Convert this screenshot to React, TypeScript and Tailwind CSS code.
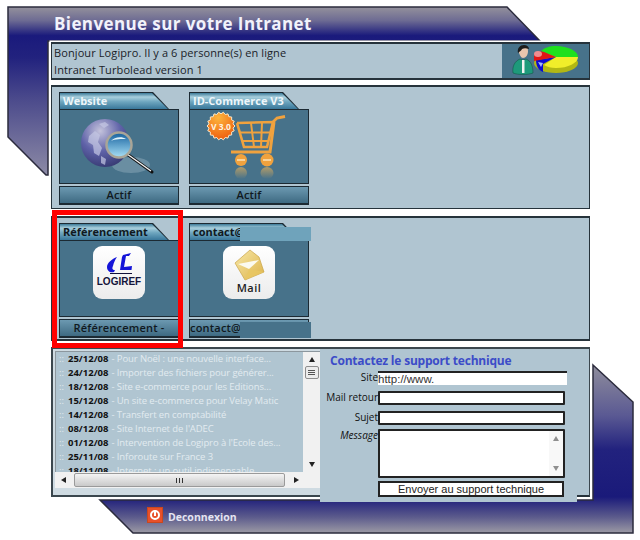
import type { ReactNode } from "react";

const news = [
  ["25/12/08", "Pour Noël : une nouvelle interface..."],
  ["24/12/08", "Importer des fichiers pour générer..."],
  ["18/12/08", "Site e-commerce pour les Editions..."],
  ["15/12/08", "Un site e-commerce pour Velay Matic"],
  ["14/12/08", "Transfert en comptabilité"],
  ["08/12/08", "Site Internet de l'ADEC"],
  ["01/12/08", "Intervention de Logipro à l'Ecole des..."],
  ["25/11/08", "Inforoute sur France 3"],
  ["18/11/08", "Internet : un outil indispensable"],
];

// sawtooth edge of the "V 3.0" sticker
const badgePoints = Array.from({ length: 36 }, (_, i) => {
  const r = i % 2 === 0 ? 14 : 12.2;
  const a = (i * Math.PI) / 18;
  return `${(31 + r * Math.cos(a)).toFixed(1)},${(16 + r * Math.sin(a)).toFixed(1)}`;
}).join(" ");

function Backdrop() {
  return (
    <svg className="absolute left-0 top-0" width="640" height="540">
      <defs>
        <linearGradient id="topBand" gradientUnits="userSpaceOnUse" x1="0" y1="7" x2="0" y2="176">
          <stop offset="0" stopColor="#94919c" />
          <stop offset="0.08" stopColor="#6d6b93" />
          <stop offset="0.17" stopColor="#1a1a7c" />
          <stop offset="0.3" stopColor="#22227e" />
          <stop offset="0.55" stopColor="#4c4b8c" />
          <stop offset="1" stopColor="#8d8ba6" />
        </linearGradient>
        <linearGradient id="lowBand" gradientUnits="userSpaceOnUse" x1="0" y1="365" x2="0" y2="534">
          <stop offset="0" stopColor="#8f8d9c" />
          <stop offset="0.3" stopColor="#5a5993" />
          <stop offset="0.5" stopColor="#22227e" />
          <stop offset="0.78" stopColor="#1a1a7a" />
          <stop offset="0.9" stopColor="#5c5b8c" />
          <stop offset="1" stopColor="#a09ea6" />
        </linearGradient>
      </defs>
      <path d="M8 7H507L540 41H48V175H46L8 137Z" fill="url(#topBand)" stroke="#2b2b3d" strokeWidth="1.5" />
      <path d="M593 365L633 402V533H133L100 500H593Z" fill="url(#lowBand)" stroke="#2b2b3d" strokeWidth="1.5" />
    </svg>
  );
}

function GlobeIcon() {
  return (
    <svg width="118" height="73" viewBox="0 0 118 73">
      <defs>
        <radialGradient id="globe" cx="0.4" cy="0.25" r="0.85">
          <stop offset="0" stopColor="#c4c3dc" />
          <stop offset="0.5" stopColor="#5f62a8" />
          <stop offset="1" stopColor="#2f3268" />
        </radialGradient>
        <linearGradient id="lens" x1="0" y1="0" x2="0" y2="1">
          <stop offset="0" stopColor="#15609e" />
          <stop offset="1" stopColor="#a8e0f6" />
        </linearGradient>
      </defs>
      <ellipse cx="71" cy="55" rx="19" ry="8" fill="#6a8ea2" />
      <circle cx="45" cy="33" r="24" fill="url(#globe)" />
      <path d="M29 26l6-5 5 4-2 7 4 6-3 8-5-3-1-8-5-3zM41 46l5 3-1 6-4-2zM39 14l6-2 4 3-5 3z" fill="#c5c8e4" opacity="0.7" />
      <path d="M67 44L92 62" stroke="#111" strokeWidth="3" strokeLinecap="round" />
      <path d="M67 44L91 61" stroke="#f3f3f3" strokeWidth="1.4" />
      <circle cx="59" cy="35" r="12.5" fill="url(#lens)" stroke="#a9a597" strokeWidth="2.5" />
      <path d="M51 31c3-4 11-5 15-2-4 0-11 0-15 2z" fill="#e2f4fb" />
    </svg>
  );
}

function CartIcon() {
  return (
    <svg width="118" height="73" viewBox="0 0 118 73">
      <defs>
        <radialGradient id="badge" cx="0.4" cy="0.2" r="0.85">
          <stop offset="0" stopColor="#fdb53d" />
          <stop offset="1" stopColor="#ee5a0c" />
        </radialGradient>
        <linearGradient id="fade" x1="0" y1="0" x2="0" y2="1">
          <stop offset="0" stopColor="#d3a95f" stopOpacity="0.75" />
          <stop offset="1" stopColor="#d3a95f" stopOpacity="0" />
        </linearGradient>
      </defs>
      <g fill="none" stroke="#f0a23e" strokeWidth="2.6">
        <path d="M47 13L83 12L77 37H54L47 13" />
        <path d="M50 22.500H81M52 31H78M61 13L64 37M72 12.500L71 37" strokeWidth="2" />
        <path d="M83 12L87 8L95 6.500" strokeWidth="2.8" />
        <path d="M41 42H80L84 12" strokeWidth="3" />
      </g>
      <circle cx="51" cy="50" r="6" fill="#f0a23e" />
      <circle cx="77" cy="50" r="6.5" fill="#f0a23e" />
      <path d="M47 50h8M73 50h8" stroke="#fbe4b8" strokeWidth="1.5" />
      <ellipse cx="51" cy="63" rx="6" ry="6" fill="url(#fade)" />
      <ellipse cx="77" cy="63" rx="6.5" ry="6" fill="url(#fade)" />
      <polygon points={badgePoints} fill="url(#badge)" stroke="#fbe9c9" strokeWidth="1" />
      <text x="31" y="19.500" textAnchor="middle" fontSize="8.500" fontWeight="700" fill="#fff3e0" fontFamily="'Open Sans', sans-serif">
        V 3.0
      </text>
    </svg>
  );
}

function LogirefIcon() {
  return (
    <svg width="52" height="31" viewBox="0 0 52 31">
      <path d="M30 9L38 7L36 10L33 10L31 21L39 20L38.500 24L27 24L29 11Z" fill="#1414d8" />
      <path d="M24 11C19 13 14 17 14 21C14 25 17 27 21 26L22 24C19 24 19 22 20 20C21 16 22 14 24 11Z" fill="#1414d8" />
      <path d="M17 27.500H39" stroke="#11113a" strokeWidth="1" />
    </svg>
  );
}

function MailIcon() {
  return (
    <svg width="52" height="36" viewBox="0 0 52 36">
      <defs>
        <linearGradient id="env" x1="0" y1="0" x2="1" y2="1">
          <stop offset="0" stopColor="#f8e8a8" />
          <stop offset="1" stopColor="#dcb248" />
        </linearGradient>
      </defs>
      <path d="M27 4L12 17L22 34L41 26L36 11Z" fill="url(#env)" stroke="#c9a347" strokeWidth="0.7" />
      <path d="M15 18L36 14L26 23Z" fill="#fbfaf0" />
      <path d="M22 34L26 23L41 26" fill="#e8c763" opacity="0.8" />
    </svg>
  );
}

function StatsIcon() {
  return (
    <svg width="85" height="34" viewBox="0 0 85 34">
      <path d="M21 2c-4 0-6 3-5 7 1 2 2 5 4 5 3 0 5-3 5-7 0-3-1-5-4-5z" fill="#e9c6ae" />
      <path d="M15 9c-1-5 2-8 6-8 3 0 5 2 5 4-3-1-5-1-7 0 0 1-2 2-4 4z" fill="#1c1c1c" />
      <path d="M10 29c-1-7 2-12 7-14l3 1 3-1c5 2 7 7 7 14-5 2-15 2-20 0z" fill="#1e9a7b" stroke="#15584a" strokeWidth="0.6" />
      <path d="M19 16h2.500v13H19z" fill="#f3f3f3" />
      <ellipse cx="53" cy="19" rx="22" ry="10" fill="#b2b814" />
      <path d="M53 13L75 13C75 7 65 2 53 2C46 2 41 4 38 7Z" fill="#1ee01e" />
      <path d="M53 13L75 13C75 19 65 24 53 24C48 24 44 23 41 21Z" fill="#f0ee2a" />
      <path d="M33 16L53 13L40 20L40 28C35 26 33 21 33 16Z" fill="#0b0bd0" />
      <path d="M35 18l5 1-2 4z" fill="#a9b6f4" />
      <path d="M31 10C35 7 39 7 41 8L53 13L31 17Z" fill="#e01515" />
      <ellipse cx="35" cy="10" rx="4" ry="3" fill="#ef8c90" />
    </svg>
  );
}

function Tile({
  title,
  status,
  titleClass,
  children,
}: {
  title: string;
  status: ReactNode;
  titleClass: string;
  children: ReactNode;
}) {
  return (
    <div className="w-[120px]">
      <div className="h-[17px] w-[110px] bg-[#1c2a33] [clip-path:polygon(0_0,94px_0,110px_100%,0_100%)] pl-px pt-px">
        <div
          className={`h-[16px] w-[108px] bg-[linear-gradient(#3c7a98,#a8cfdd_25%,#6ea6bf_55%,#39779a)] [clip-path:polygon(0_0,92px_0,108px_100%,0_100%)] pl-[3px] text-[11px] font-bold leading-[15px] ${titleClass}`}
        >
          {title}
        </div>
      </div>
      {children}
      <div className="mt-[2px] h-[19px] border border-b-2 border-[#1c2a33] bg-[linear-gradient(#6c99b1,#3e6a82)] text-center text-[11px] font-semibold leading-[16px] tracking-[0.2px] text-[#10191f]">
        {status}
      </div>
    </div>
  );
}

function TileBody({ tall, children }: { tall?: boolean; children: ReactNode }) {
  return <div className={`${tall ? "h-[77px]" : "h-[75px]"} border border-[#1c2a33] bg-[#47728a]`}>{children}</div>;
}

function AppIcon({ children }: { children: ReactNode }) {
  return (
    <div className="mx-auto mt-[5px] flex h-[53px] w-[52px] flex-col items-center rounded-[9px] bg-[linear-gradient(#ffffff,#ececec)]">
      {children}
    </div>
  );
}

function FormRow({ label, italic, children }: { label: string; italic?: boolean; children: ReactNode }) {
  return (
    <div className="flex">
      <div className={`w-[57px] shrink-0 whitespace-nowrap text-right text-[10px] font-medium leading-[13px] text-[#111] ${italic ? "italic" : ""}`}>
        {label}
      </div>
      {children}
    </div>
  );
}

function Triangle({ dir }: { dir: "up" | "down" | "left" | "right" }) {
  const points = { up: "4,1 7,6 1,6", down: "1,2 7,2 4,7", left: "6,1 6,7 1,4", right: "2,1 2,7 7,4" }[dir];
  return (
    <svg width="8" height="8" viewBox="0 0 8 8">
      <polygon points={points} fill="#222" />
    </svg>
  );
}

export default function App() {
  return (
    <div className="relative h-[540px] w-[640px] overflow-hidden bg-white pl-[51px] pt-[14px] font-['Open_Sans',sans-serif] text-[#111]">
      <Backdrop />

      <div className="relative w-[539px]">
        <h1 className="h-[28px] pl-[3px] text-[17px] font-bold leading-[20px] tracking-[0.4px] text-[#f2f2fb]">
          Bienvenue sur votre Intranet
        </h1>

        {/* Greeting */}
        <div className="flex h-[38px] border-2 border-x border-[#26333b] bg-[#b0c5d1] shadow-[0_0_0_1.5px_#fff]">
          <div className="flex-1 pl-[2px] text-[11px] font-medium leading-[17px] tracking-[0.1px] text-[#1a2228]">
            <p>Bonjour Logipro. Il y a 6 personne(s) en ligne</p>
            <p>Intranet Turbolead version 1</p>
          </div>
          <div className="flex w-[87px] items-center justify-center bg-[#47728a]">
            <StatsIcon />
          </div>
        </div>

        {/* Applications */}
        <div className="mt-[5px] flex h-[124px] gap-[10px] border-2 border-x border-b border-[#26333b] bg-[#b0c5d1] pl-[7px] pt-[5px]">
          <Tile title="Website" titleClass="text-[#eef6fa]" status="Actif">
            <TileBody>
              <GlobeIcon />
            </TileBody>
          </Tile>
          <Tile title="ID-Commerce V3" titleClass="text-[#eef6fa]" status="Actif">
            <TileBody>
              <CartIcon />
            </TileBody>
          </Tile>
        </div>

        <div className="relative mt-[7px]">
          <div className="flex h-[125px] gap-[10px] overflow-hidden border-2 border-x border-[#26333b] bg-[#b0c5d1] pl-[7px] pt-[5px]">
            <Tile title="Référencement" titleClass="text-[#10191f]" status="Référencement - Logiref">
              <TileBody tall>
                <AppIcon>
                  <LogirefIcon />
                  <span className="-mt-px font-['Liberation_Sans',sans-serif] text-[10px] font-bold leading-[12px] text-[#14143a]">
                    LOGIREF
                  </span>
                </AppIcon>
              </TileBody>
            </Tile>
            <Tile title="contact@" titleClass="text-[#10191f]" status={<span className="block text-left">contact@</span>}>
              <TileBody tall>
                <AppIcon>
                  <MailIcon />
                  <span className="text-[11px] font-semibold leading-[12px] tracking-[0.5px] text-[#222]">Mail</span>
                </AppIcon>
              </TileBody>
            </Tile>
          </div>
          {/* masked address, on the tab and on the status bar */}
          <div className="absolute left-[189px] top-[11px] h-[14px] w-[71px] bg-[#6fa3bb]" />
          <div className="absolute left-[189px] top-[106px] h-[16px] w-[71px] bg-[#47728a]" />
          {/* red highlight */}
          <div className="absolute -top-[6px] left-[1px] h-[138px] w-[131px] border-[5px] border-[#ff0000]" />
        </div>

        {/* News and support form */}
        <div className="mt-[6px] flex h-[150px]">
          <div className="flex w-[269px] flex-col border-2 border-r-0 border-[#3b474e] bg-[#cfdbe2] pl-[2px] pt-[2px]">
            <div className="flex h-[121px] border-l border-t border-[#8c979e]">
              <div className="h-[121px] flex-1 overflow-hidden bg-[#b0c5d1] pl-[3px] font-['Open_Sans',sans-serif] text-[9.5px] font-medium leading-[14px] text-[#e2ebf0]">
                {news.map(([date, text]) => (
                  <p key={date + text} className="whitespace-nowrap">
                    <span className="mr-[4px]">::</span>
                    <b className="font-bold text-[#111]">{date}</b>
                    <span className="ml-[3px] tracking-[-0.1px]">- {text}</span>
                  </p>
                ))}
              </div>
              <div className="flex w-[17px] flex-col items-center bg-[#f1f1f1] py-[4px]">
                <Triangle dir="up" />
                <div className="mt-[2px] flex h-[13px] w-[14px] flex-col items-center justify-center gap-px rounded-[2px] border border-[#8d8d8d] bg-[#ececec]">
                  <span className="h-px w-[7px] bg-[#555]" />
                  <span className="h-px w-[7px] bg-[#555]" />
                  <span className="h-px w-[7px] bg-[#555]" />
                </div>
                <div className="flex-1" />
                <Triangle dir="down" />
              </div>
            </div>
            <div className="flex h-[16px] items-center bg-[#f1f1f1] pl-[5px]">
              <Triangle dir="left" />
              <div className="ml-[6px] flex h-[14px] w-[211px] items-center justify-center gap-px rounded-[2px] border border-[#9a9a9a] bg-[linear-gradient(#f4f4f4,#c9c9c9)]">
                <span className="h-[5px] w-px bg-[#333]" />
                <span className="ml-px h-[5px] w-px bg-[#333]" />
                <span className="ml-px h-[5px] w-px bg-[#333]" />
              </div>
              <div className="ml-[7px]">
                <Triangle dir="right" />
              </div>
            </div>
          </div>

          <div className="relative flex-1 border-2 border-l-0 border-r-[1.5px] border-[#3b474e] border-b-[#26333b] bg-[#b0c5d1] shadow-[1px_2px_0_#fff]">
            <div className="absolute left-0 top-full h-[7px] w-[257px] bg-[#b0c5d1]" />
            <div className="relative pl-[1px]">
              <h2 className="pl-[9px] pt-[3px] text-[12px] font-bold leading-[18px] tracking-[-0.2px] text-[#3c4cc8]">
                Contactez le support technique
              </h2>
              <div className="mt-[1px] flex flex-col">
                <FormRow label="Site">
                  <div className="h-[14px] w-[189px] border-t-2 border-[#222] bg-white font-['Liberation_Sans',sans-serif] text-[11.5px] leading-[13px] text-[#333]">
                    http://www.
                  </div>
                </FormRow>
                <div className="mt-[6px]">
                  <FormRow label="Mail retour">
                    <div className="h-[14px] w-[187px] rounded-[1px] border-2 border-[#222] bg-white" />
                  </FormRow>
                </div>
                <div className="mt-[6px]">
                  <FormRow label="Sujet">
                    <div className="h-[14px] w-[187px] rounded-[1px] border-2 border-[#222] bg-white" />
                  </FormRow>
                </div>
                <div className="mt-[4px]">
                  <FormRow label="Message" italic>
                    <div className="flex h-[49px] w-[187px] justify-end rounded-[1px] border-2 border-[#222] bg-white">
                      <div className="flex w-[14px] flex-col items-center justify-between bg-[#f2f2f2] py-[4px] opacity-50">
                        <Triangle dir="up" />
                        <Triangle dir="down" />
                      </div>
                    </div>
                  </FormRow>
                </div>
                <div className="ml-[57px] mt-[3px] flex h-[16px] w-[186px] items-center justify-center border-2 border-[#222] bg-white font-['Liberation_Sans',sans-serif] text-[11px] text-[#222]">
                  Envoyer au support technique
                </div>
              </div>
            </div>
          </div>
        </div>

        {/* Footer */}
        <div className="mt-[8px] flex items-center pl-[96px]">
          <div className="flex h-[16px] w-[16px] items-center justify-center border border-[#c9481f] bg-[#e8502a]">
            <div className="flex h-[10px] w-[10px] items-start justify-center rounded-full border-2 border-white">
              <span className="-mt-[2px] h-[6px] w-[2px] bg-white" />
            </div>
          </div>
          <span className="ml-[5px] mt-[5px] text-[10.5px] font-bold text-[#e4e4f2]">Deconnexion</span>
        </div>
      </div>
    </div>
  );
}
